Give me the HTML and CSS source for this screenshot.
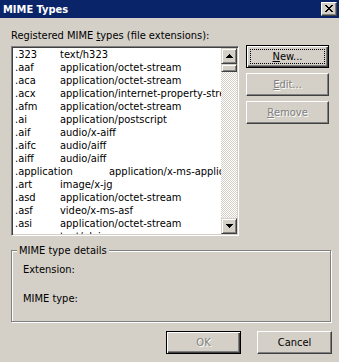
FILE: index.html
```html
<!DOCTYPE html>
<html>
<head>
    <title>MIME Types</title>
    <link rel="stylesheet" href="styles.css">
</head>
<body>
    <div class="dialog">
        <div class="titlebar">
            <span class="title">MIME Types</span>
            <div class="close-btn">
                <svg width="8" height="7" viewBox="0 0 8 7" shape-rendering="crispEdges">
                    <path d="M0 0h2v1h1v1h2v-1h1v-1h2v1h-1v1h-1v1h-1v1h1v1h1v1h1v1h-2v-1h-1v-1h-2v1h-1v1h-2v-1h1v-1h1v-1h1v-1h-1v-1h-1v-1h-1z" fill="#000"/>
                </svg>
            </div>
        </div>

        <div class="dialog-body">
            <div class="list-label">Registered MIME <u>t</u>ypes (file extensions):</div>

            <div class="list-area">
                <div class="listbox">
                    <div class="list-rows">
                        <div class="row"><span class="ext">.323</span><span>text/h323</span></div>
                        <div class="row"><span class="ext">.aaf</span><span>application/octet-stream</span></div>
                        <div class="row"><span class="ext">.aca</span><span>application/octet-stream</span></div>
                        <div class="row"><span class="ext">.acx</span><span>application/internet-property-stream</span></div>
                        <div class="row"><span class="ext">.afm</span><span>application/octet-stream</span></div>
                        <div class="row"><span class="ext">.ai</span><span>application/postscript</span></div>
                        <div class="row"><span class="ext">.aif</span><span>audio/x-aiff</span></div>
                        <div class="row"><span class="ext">.aifc</span><span>audio/aiff</span></div>
                        <div class="row"><span class="ext">.aiff</span><span>audio/aiff</span></div>
                        <div class="row"><span class="ext wide">.application</span><span>application/x-ms-application</span></div>
                        <div class="row"><span class="ext">.art</span><span>image/x-jg</span></div>
                        <div class="row"><span class="ext">.asd</span><span>application/octet-stream</span></div>
                        <div class="row"><span class="ext">.asf</span><span>video/x-ms-asf</span></div>
                        <div class="row"><span class="ext">.asi</span><span>application/octet-stream</span></div>
                        <div class="row"><span class="ext">.asm</span><span>text/plain</span></div>
                    </div>
                    <div class="scrollbar">
                        <div class="sb-btn">
                            <svg width="7" height="4" viewBox="0 0 7 4" shape-rendering="crispEdges"><path d="M3 0h1v1h1v1h1v1h1v1h-7v-1h1v-1h1v-1h1z" fill="#000"/></svg>
                        </div>
                        <div class="sb-thumb"></div>
                        <div class="sb-track"></div>
                        <div class="sb-btn">
                            <svg width="7" height="4" viewBox="0 0 7 4" shape-rendering="crispEdges"><path d="M0 0h7v1h-1v1h-1v1h-1v1h-1v-1h-1v-1h-1v-1h-1z" fill="#000"/></svg>
                        </div>
                    </div>
                </div>

                <div class="side-buttons">
                    <button class="btn default"><span class="focus"><u>N</u>ew...</span></button>
                    <button class="btn" disabled><u>E</u>dit...</button>
                    <button class="btn" disabled><u>R</u>emove</button>
                </div>
            </div>

            <fieldset class="details">
                <legend>MIME type details</legend>
                <div class="detail-row">Extension:</div>
                <div class="detail-row">MIME type:</div>
            </fieldset>

            <div class="footer">
                <button class="btn default" disabled>OK</button>
                <button class="btn">Cancel</button>
            </div>
        </div>
    </div>
</body>
</html>
```

FILE: styles.css
```css
body {
    margin: 0;
    font-family: "DejaVu Sans Condensed", "DejaVu Sans", sans-serif;
    font-stretch: condensed;
    font-size: 11px;
    line-height: 13px;
    color: #000;
    background-color: #d4d0c8;
}
.dialog {
    width: 339px;
    height: 362px;
    background-color: #d4d0c8;
}
.titlebar {
    height: 18px;
    background-color: #0a246a;
    display: flex;
    align-items: center;
    justify-content: space-between;
    padding: 0 2px 0 3px;
}
.title {
    color: #fff;
    font-weight: bold;
}
.close-btn {
    width: 16px;
    height: 14px;
    box-sizing: border-box;
    background-color: #d4d0c8;
    border: 1px solid;
    border-color: #fff #404040 #404040 #fff;
    box-shadow: inset -1px -1px #808080;
    display: flex;
    align-items: center;
    justify-content: center;
    padding: 0 1px 1px 0;
}
.close-btn svg {
    display: block;
}
.dialog-body {
    padding: 11px 7px 0 11px;
}
.list-label {
    height: 13px;
    margin-bottom: 4px;
}
.list-area {
    display: flex;
    align-items: flex-start;
}
.listbox {
    width: 228px;
    height: 190px;
    box-sizing: border-box;
    border: 1px solid;
    border-color: #808080 #fff #fff #808080;
    box-shadow: inset 1px 1px #404040, inset -1px -1px #d4d0c8;
    padding: 1px;
    display: flex;
    background-color: #fff;
}
.list-rows {
    flex: 1;
    overflow: hidden;
    background-color: #fff;
}
.row {
    height: 13px;
    line-height: 13px;
    white-space: nowrap;
    padding-left: 2px;
    display: flex;
}
.ext {
    width: 45px;
    flex-shrink: 0;
}
.ext.wide {
    width: 94px;
}
.scrollbar {
    width: 16px;
    display: flex;
    flex-direction: column;
}
.sb-btn,
.sb-thumb {
    box-sizing: border-box;
    background-color: #d4d0c8;
    border: 1px solid;
    border-color: #d4d0c8 #404040 #404040 #d4d0c8;
    box-shadow: inset 1px 1px #fff, inset -1px -1px #808080;
}
.sb-btn {
    height: 16px;
    display: flex;
    align-items: center;
    justify-content: center;
}
.sb-btn svg {
    display: block;
}
.sb-thumb {
    height: 8px;
}
.sb-track {
    flex: 1;
    background: repeating-conic-gradient(#d4d0c8 0 25%, #fff 0 50%) 0 0 / 2px 2px;
}
.side-buttons {
    display: flex;
    flex-direction: column;
    gap: 5px;
    margin-left: 7px;
    margin-top: -1px;
}
.btn {
    font: inherit;
    color: #000;
    width: 83px;
    height: 23px;
    box-sizing: border-box;
    background-color: #d4d0c8;
    border: 1px solid;
    border-color: #fff #404040 #404040 #fff;
    box-shadow: inset -1px -1px #808080;
    padding: 0;
    display: flex;
    align-items: center;
    justify-content: center;
}
.btn.default {
    border-color: #000;
    box-shadow: inset 1px 1px #fff, inset -1px -1px #404040, inset -2px -2px #808080;
}
.btn:disabled {
    color: #808080;
    text-shadow: 1px 1px 0 #fff;
}
.focus {
    flex: 1;
    align-self: stretch;
    margin: 3px;
    border: 1px dotted #000;
    display: flex;
    align-items: center;
    justify-content: center;
}
.details {
    margin: 8px 1px 0 0;
    padding: 6px 11px 16px;
    min-width: 0;
    border: 1px solid #808080;
    box-shadow: inset 1px 1px #fff, 1px 1px #fff;
}
.details legend {
    padding: 0 2px;
    margin-left: -6px;
    background-color: #d4d0c8;
    line-height: 13px;
}
.detail-row {
    height: 13px;
}
.detail-row + .detail-row {
    margin-top: 16px;
}
.footer {
    display: flex;
    justify-content: flex-end;
    gap: 16px;
    margin-top: 9px;
}
.footer .btn {
    width: 75px;
}
```
